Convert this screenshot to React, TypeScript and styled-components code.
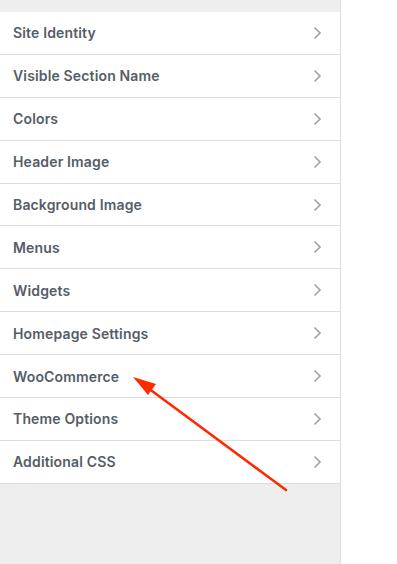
import React from 'react';
import styled, { createGlobalStyle } from 'styled-components';

const GlobalStyle = createGlobalStyle`
  html, body {
    margin: 0;
    padding: 0;
    background: #fff;
  }
  body {
    font-family: Inter, "Open Sans", "Liberation Sans", sans-serif;
  }
`;

const Page = styled.div`
  position: relative;
  width: 397px;
  height: 564px;
  overflow: hidden;
  background: #fff;
`;

const Panel = styled.div`
  width: 340px;
  height: 564px;
  background: #eee;
  border-right: 1px solid #ddd;
  padding-top: 12px;
  box-sizing: content-box;
`;

const List = styled.ul`
  list-style: none;
  margin: 0;
  padding: 0;
`;

const Item = styled.li`
  display: flex;
  align-items: center;
  justify-content: space-between;
  height: 41.9px;
  padding: 0 18px 0 13px;
  background: #fff;
  border-bottom: 1px solid #ddd;
  color: #555d66;
  font-size: 14px;
  font-weight: 600;
  letter-spacing: 0.15px;
`;

const Chevron = styled.svg`
  width: 9px;
  height: 14px;
  flex-shrink: 0;
`;

const Arrow = styled.svg`
  position: absolute;
  left: 0;
  top: 0;
  pointer-events: none;
`;

const SECTIONS = [
  'Site Identity',
  'Visible Section Name',
  'Colors',
  'Header Image',
  'Background Image',
  'Menus',
  'Widgets',
  'Homepage Settings',
  'WooCommerce',
  'Theme Options',
  'Additional CSS',
];

function App() {
  return (
    <Page>
      <GlobalStyle />
      <Panel>
        <List>
          {SECTIONS.map((name) => (
            <Item key={name}>
              {name}
              <Chevron viewBox="0 0 9 14">
                <path d="M1.5 1.5 L7 7 L1.5 12.5" fill="none" stroke="#a0a5aa" strokeWidth="1.7" />
              </Chevron>
            </Item>
          ))}
        </List>
      </Panel>
      <Arrow width="397" height="564" viewBox="0 0 397 564">
        <line x1="286" y1="490" x2="148" y2="388" stroke="#ff2a00" strokeWidth="2.5" strokeLinecap="round" />
        <polygon points="133,377 156,384 148,395" fill="#ff2a00" />
      </Arrow>
    </Page>
  );
}

export default App;
